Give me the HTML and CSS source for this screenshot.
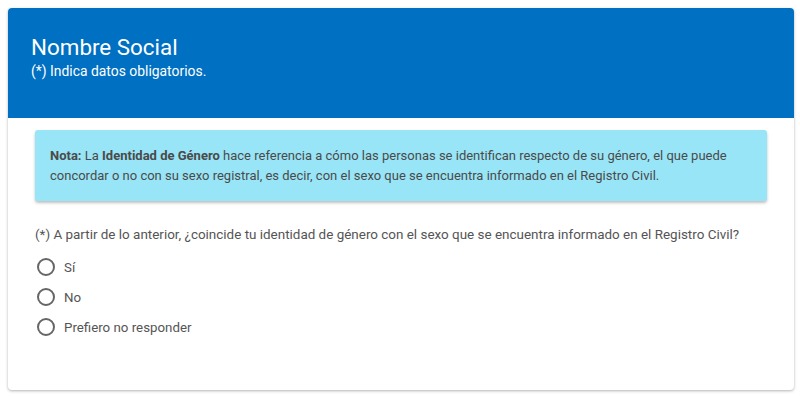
FILE: index.html
```html
<!DOCTYPE html>
<html lang="es">
<head>
    <meta charset="UTF-8">
    <meta name="viewport" content="width=device-width, initial-scale=1.0">
    <title>Nombre Social</title>
    <link rel="stylesheet" href="styles.css">
</head>
<body>
    <div class="card">
        <div class="card-header">
            <h1>Nombre Social</h1>
            <p class="subtitle">(*) Indica datos obligatorios.</p>
        </div>

        <div class="card-body">
            <div class="note">
                <b>Nota:</b> La <b>Identidad de Género</b> hace referencia a cómo las personas se identifican respecto de su género, el que puede concordar o no con su sexo registral, es decir, con el sexo que se encuentra informado en el Registro Civil.
            </div>

            <p class="question">(*) A partir de lo anterior, ¿coincide tu identidad de género con el sexo que se encuentra informado en el Registro Civil?</p>

            <div class="options">
                <label class="option">
                    <input type="radio" name="coincide" value="si">
                    <span class="radio"></span>
                    Sí
                </label>
                <label class="option">
                    <input type="radio" name="coincide" value="no">
                    <span class="radio"></span>
                    No
                </label>
                <label class="option">
                    <input type="radio" name="coincide" value="nr">
                    <span class="radio"></span>
                    Prefiero no responder
                </label>
            </div>
        </div>
    </div>
</body>
</html>
```

FILE: styles.css
```css
body {
    font-family: Roboto, "Liberation Sans", Arial, sans-serif;
    background-color: #ffffff;
    color: #555555;
    margin: 0;
    padding: 8px 6px 6px 8px;
}

.card {
    background-color: #ffffff;
    border-radius: 4px;
    box-shadow: 0 1px 3px rgba(0, 0, 0, 0.3);
    overflow: hidden;
    height: 382px;
}

.card-header {
    background-color: #0070c2;
    color: #ffffff;
    padding: 25px 23px 0;
    height: 85px;
}

h1 {
    margin: 0;
    font-size: 22.4px;
    font-weight: 400;
    line-height: 28px;
}

.subtitle {
    margin: 1px 0 0;
    font-size: 13.9px;
    line-height: 18px;
}

.card-body {
    padding: 12px 27px 0;
}

.note {
    background-color: #98e5f7;
    color: #4a4a4a;
    font-size: 13px;
    line-height: 20px;
    padding: 16px 14px 15px 15px;
    border-radius: 3px;
    box-shadow: 0 2px 3px rgba(0, 0, 0, 0.25);
}

.note b {
    font-weight: 700;
}

.question {
    margin: 25px 0 13px;
    font-size: 13.45px;
    line-height: 18px;
}

.options {
    display: flex;
    flex-direction: column;
    gap: 10px;
}

.option {
    display: flex;
    align-items: center;
    gap: 9px;
    font-size: 13.3px;
    height: 20px;
    cursor: pointer;
}

.option input {
    display: none;
}

.radio {
    width: 14px;
    height: 14px;
    border: 2px solid #666666;
    border-radius: 50%;
    margin-left: 2px;
}

.option input:checked + .radio {
    border-color: #0070c2;
    background: radial-gradient(#0070c2 40%, transparent 45%);
}
```
